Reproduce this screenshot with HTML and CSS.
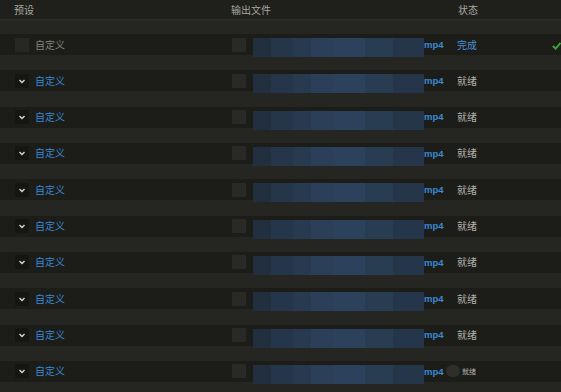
FILE: index.html
```html
<!DOCTYPE html>
<html lang="zh">
<head>
<meta charset="utf-8">
<link rel="stylesheet" href="styles.css">
</head>
<body>
<div class="table">
  <div class="head">
    <span class="h-preset">预设</span>
    <span class="h-file">输出文件</span>
    <span class="h-status">状态</span>
  </div>
  <div class="rows">
    <div class="row"><div class="band">
      <span class="box dim"></span><span class="preset gray">自定义</span>
      <span class="sq"></span><span class="file"></span><span class="ext">mp4</span>
      <span class="status blue">完成</span>
      <svg class="check" viewBox="0 0 10 10"><path d="M1 5.5 L4 8.5 L9.5 2" fill="none" stroke="#3aa53a" stroke-width="2.2"/></svg>
    </div></div>
    <div class="row"><div class="band">
      <span class="box"><svg viewBox="0 0 10 10"><path d="M2.5 4 L5 6.5 L7.5 4" fill="none" stroke="#d8d8d2" stroke-width="1.4"/></svg></span><span class="preset">自定义</span>
      <span class="sq"></span><span class="file"></span><span class="ext">mp4</span><span class="status">就绪</span>
    </div></div>
    <div class="row"><div class="band">
      <span class="box"><svg viewBox="0 0 10 10"><path d="M2.5 4 L5 6.5 L7.5 4" fill="none" stroke="#d8d8d2" stroke-width="1.4"/></svg></span><span class="preset">自定义</span>
      <span class="sq"></span><span class="file"></span><span class="ext">mp4</span><span class="status">就绪</span>
    </div></div>
    <div class="row"><div class="band">
      <span class="box"><svg viewBox="0 0 10 10"><path d="M2.5 4 L5 6.5 L7.5 4" fill="none" stroke="#d8d8d2" stroke-width="1.4"/></svg></span><span class="preset">自定义</span>
      <span class="sq"></span><span class="file"></span><span class="ext">mp4</span><span class="status">就绪</span>
    </div></div>
    <div class="row"><div class="band">
      <span class="box"><svg viewBox="0 0 10 10"><path d="M2.5 4 L5 6.5 L7.5 4" fill="none" stroke="#d8d8d2" stroke-width="1.4"/></svg></span><span class="preset">自定义</span>
      <span class="sq"></span><span class="file"></span><span class="ext">mp4</span><span class="status">就绪</span>
    </div></div>
    <div class="row"><div class="band">
      <span class="box"><svg viewBox="0 0 10 10"><path d="M2.5 4 L5 6.5 L7.5 4" fill="none" stroke="#d8d8d2" stroke-width="1.4"/></svg></span><span class="preset">自定义</span>
      <span class="sq"></span><span class="file"></span><span class="ext">mp4</span><span class="status">就绪</span>
    </div></div>
    <div class="row"><div class="band">
      <span class="box"><svg viewBox="0 0 10 10"><path d="M2.5 4 L5 6.5 L7.5 4" fill="none" stroke="#d8d8d2" stroke-width="1.4"/></svg></span><span class="preset">自定义</span>
      <span class="sq"></span><span class="file"></span><span class="ext">mp4</span><span class="status">就绪</span>
    </div></div>
    <div class="row"><div class="band">
      <span class="box"><svg viewBox="0 0 10 10"><path d="M2.5 4 L5 6.5 L7.5 4" fill="none" stroke="#d8d8d2" stroke-width="1.4"/></svg></span><span class="preset">自定义</span>
      <span class="sq"></span><span class="file"></span><span class="ext">mp4</span><span class="status">就绪</span>
    </div></div>
    <div class="row"><div class="band">
      <span class="box"><svg viewBox="0 0 10 10"><path d="M2.5 4 L5 6.5 L7.5 4" fill="none" stroke="#d8d8d2" stroke-width="1.4"/></svg></span><span class="preset">自定义</span>
      <span class="sq"></span><span class="file"></span><span class="ext">mp4</span><span class="status">就绪</span>
    </div></div>
    <div class="row"><div class="band">
      <span class="box"><svg viewBox="0 0 10 10"><path d="M2.5 4 L5 6.5 L7.5 4" fill="none" stroke="#d8d8d2" stroke-width="1.4"/></svg></span><span class="preset">自定义</span>
      <span class="sq"></span><span class="file"></span><span class="ext last">mp4</span><span class="blob"></span><span class="status small">就绪</span>
    </div></div>
  </div>
</div>
</body>
</html>
```
FILE: styles.css
```css
html, body {
  margin: 0;
  padding: 0;
  background: #252521;
  width: 561px;
  height: 392px;
  overflow: hidden;
  font-family: "Noto Sans CJK SC", "Noto Sans", sans-serif;
  font-size: 10px;
}
.table {
  position: relative;
}
.head {
  height: 19px;
  background: #1f1f1b;
  border-bottom: 1px solid #2c2c28;
  display: flex;
  align-items: center;
  color: #a8a8a2;
  line-height: 1;
}
.h-preset { margin-left: 14px; width: 217px; }
.h-file { width: 227px; }
.rows {
  margin-top: 14px;
  display: grid;
  grid-auto-rows: 36.33px;
}
.band {
  height: 21px;
  background: #1c1c19;
  display: flex;
  align-items: center;
  position: relative;
}
.box {
  margin-left: 15px;
  width: 14px;
  height: 14px;
  background: #151513;
  border-radius: 1px;
  display: flex;
  align-items: center;
  justify-content: center;
}
.box svg { width: 10px; height: 10px; }
.box.dim { background: #272724; }
.preset {
  margin-left: 6px;
  width: 197px;
  color: #3a8ad4;
  line-height: 1;
}
.preset.gray { color: #85857f; }
.sq {
  width: 14px;
  height: 14px;
  background: #292926;
  border-radius: 1px;
}
.file {
  align-self: flex-start;
  margin-top: 4px;
  margin-left: 7px;
  width: 171px;
  height: 19px;
  background: linear-gradient(90deg,
    #222f3e 0, #222f3e 18px,
    #26364a 18px, #26364a 40px,
    #283a50 40px, #283a50 58px,
    #2b4058 58px, #2b4058 80px,
    #2c425c 80px, #2c425c 112px,
    #293d52 112px, #293d52 140px,
    #26364a 140px, #26364a 171px);
}
.ext {
  width: 33px;
  color: #3a8ad4;
  font-family: "Liberation Sans", sans-serif;
  font-weight: bold;
  font-size: 9.5px;
  line-height: 1;
}
.ext.last { width: 22px; }
.blob {
  width: 14px;
  height: 12px;
  border-radius: 6px;
  background: #2e2e2b;
}
.status {
  color: #b2b2ab;
  line-height: 1;
}
.status.blue { color: #4a90d9; }
.status.small { font-size: 7px; margin-left: 2px; }
.check {
  position: absolute;
  right: 0;
  top: 7px;
  width: 9px;
  height: 9px;
}
```
